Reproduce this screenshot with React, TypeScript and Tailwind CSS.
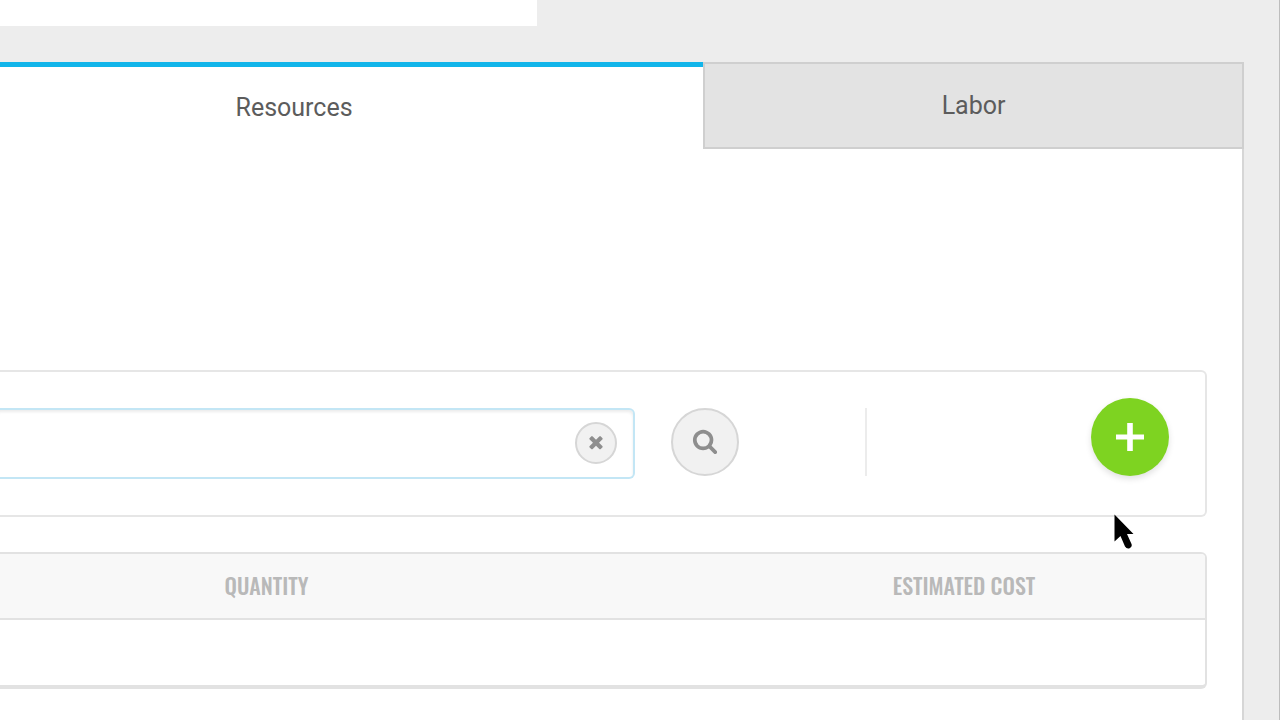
import React, { useState } from "react";

function TimesIcon() {
  return (
    <svg viewBox="0 0 1792 1792" className="size-5" fill="currentColor" aria-hidden="true">
      <path d="M1490 1322q0 40-28 68l-136 136q-28 28-68 28t-68-28l-294-294-294 294q-28 28-68 28t-68-28l-136-136q-28-28-28-68t28-68l294-294-294-294q-28-28-28-68t28-68l136-136q28-28 68-28t68 28l294 294 294-294q28-28 68-28t68 28l136 136q28 28 28 68t-28 68l-294 294 294 294q28 28 28 68z" />
    </svg>
  );
}

function SearchIcon() {
  return (
    <svg viewBox="0 0 1792 1792" className="size-[26px]" fill="currentColor" aria-hidden="true">
      <path d="M1216 832q0-185-131.5-316.5t-316.5-131.5-316.5 131.5-131.5 316.5 131.5 316.5 316.5 131.5 316.5-131.5 131.5-316.5zm512 832q0 52-38 90t-90 38q-54 0-90-38l-343-342q-179 124-399 124-143 0-273.5-55.5t-225-150-150-225-55.5-273.5 55.5-273.5 150-225 225-150 273.5-55.5 273.5 55.5 225 150 150 225 55.5 273.5q0 220-124 399l343 343q37 37 37 90z" />
    </svg>
  );
}

function PlusIcon() {
  return (
    <svg viewBox="0 0 28 28" className="size-7" fill="currentColor" aria-hidden="true">
      <path d="M11.200 0h5.600v11.500H28v5H16.800V28h-5.600V16.500H0v-5h11.200z" />
    </svg>
  );
}

function Pointer() {
  return (
    <svg viewBox="0 0 20 35" className="absolute top-[514px] left-[1114px] h-[35px] w-5" aria-hidden="true">
      <path d="M0.500 0.500V27.500L6.500 22L11 32.500Q13 35.500 16 34Q18.500 32.500 17.500 30L13 20H19.500Z" fill="#000" />
    </svg>
  );
}

function Tabs() {
  return (
    <div role="tablist" className="grid grid-cols-[13fr_10fr] text-[25px] text-[#5c5c5c]">
      <button
        type="button"
        role="tab"
        aria-selected="true"
        className="h-[87px] border-t-[5px] border-[#12b5ea] bg-white pr-[115px]"
      >
        Resources
      </button>
      <button
        type="button"
        role="tab"
        aria-selected="false"
        className="h-[87px] border-2 border-[#cfcfcf] bg-[#e3e3e3]"
      >
        Labor
      </button>
    </div>
  );
}

function SearchCard() {
  const [query, setQuery] = useState("");
  return (
    <div className="flex items-start rounded-r-md border-2 border-l-0 border-[#e6e6e6] py-9 pr-9">
      <div className="flex h-[71px] w-[635px] items-center rounded-r-md border-2 border-l-0 border-[#c3e6f5] bg-white pr-4 pb-0.5 shadow-[inset_-1px_3px_3px_-1px_rgba(0,0,0,0.08)]">
        <input
          type="text"
          aria-label="Search resources"
          value={query}
          onChange={(e) => setQuery(e.target.value)}
          className="h-full min-w-0 flex-1 bg-transparent px-6 text-2xl text-[#5c5c5c] outline-none"
        />
        <button
          type="button"
          aria-label="Clear"
          onClick={() => setQuery("")}
          className="flex size-[42px] items-center justify-center rounded-full border-2 border-[#d6d6d6] bg-[#f1f1f1] pb-0.5 text-[#8e8e8e]"
        >
          <TimesIcon />
        </button>
      </div>
      <button
        type="button"
        aria-label="Search"
        className="ml-9 flex size-[68px] shrink-0 items-center justify-center rounded-full border-2 border-[#d6d6d6] bg-[#f1f1f1] pb-0.5 text-[#8e8e8e]"
      >
        <SearchIcon />
      </button>
      <div className="ml-[126px] h-[68px] w-0.5 bg-[#ececec]" />
      <button
        type="button"
        aria-label="Add resource"
        className="-mt-2.5 -mb-2.5 ml-auto flex size-[78px] shrink-0 items-center justify-center rounded-full bg-[#7ed321] text-white shadow-[0_3px_6px_rgba(0,0,0,0.12)]"
      >
        <PlusIcon />
      </button>
    </div>
  );
}

function CostTable() {
  return (
    <div className="overflow-hidden rounded-r-md border-2 border-b-4 border-l-0 border-[#e2e2e2]">
      <table className="w-full table-fixed border-collapse">
        <thead className="bg-[#f8f8f8] text-[22px] text-[#b9b9b9]">
          <tr className="h-[65px] border-b-2 border-[#e2e2e2] font-['Oswald','Roboto_Condensed','Liberation_Sans_Narrow',sans-serif]">
            <th scope="col" className="w-3/5 pr-[190px] pb-0.5 text-center font-medium">
              QUANTITY
            </th>
            <th scope="col" className="pb-0.5 text-center font-medium">
              ESTIMATED COST
            </th>
          </tr>
        </thead>
        <tbody>
          <tr className="h-[66px]">
            <td />
            <td />
          </tr>
        </tbody>
      </table>
    </div>
  );
}

export default function App() {
  return (
    <div className="relative flex min-h-screen flex-col border-r border-[#bdbdbd] bg-[#ededed] font-['Roboto',sans-serif]">
      <div className="h-[26px] w-[42%] bg-white" />
      <main className="mt-9 mr-[35px] flex flex-1 flex-col">
        <Tabs />
        <section className="flex flex-1 flex-col gap-[35px] border-r-2 border-[#d6d6d6] bg-white pt-[221px] pr-[35px] pb-[30px]">
          <SearchCard />
          <CostTable />
        </section>
      </main>
      <Pointer />
    </div>
  );
}
